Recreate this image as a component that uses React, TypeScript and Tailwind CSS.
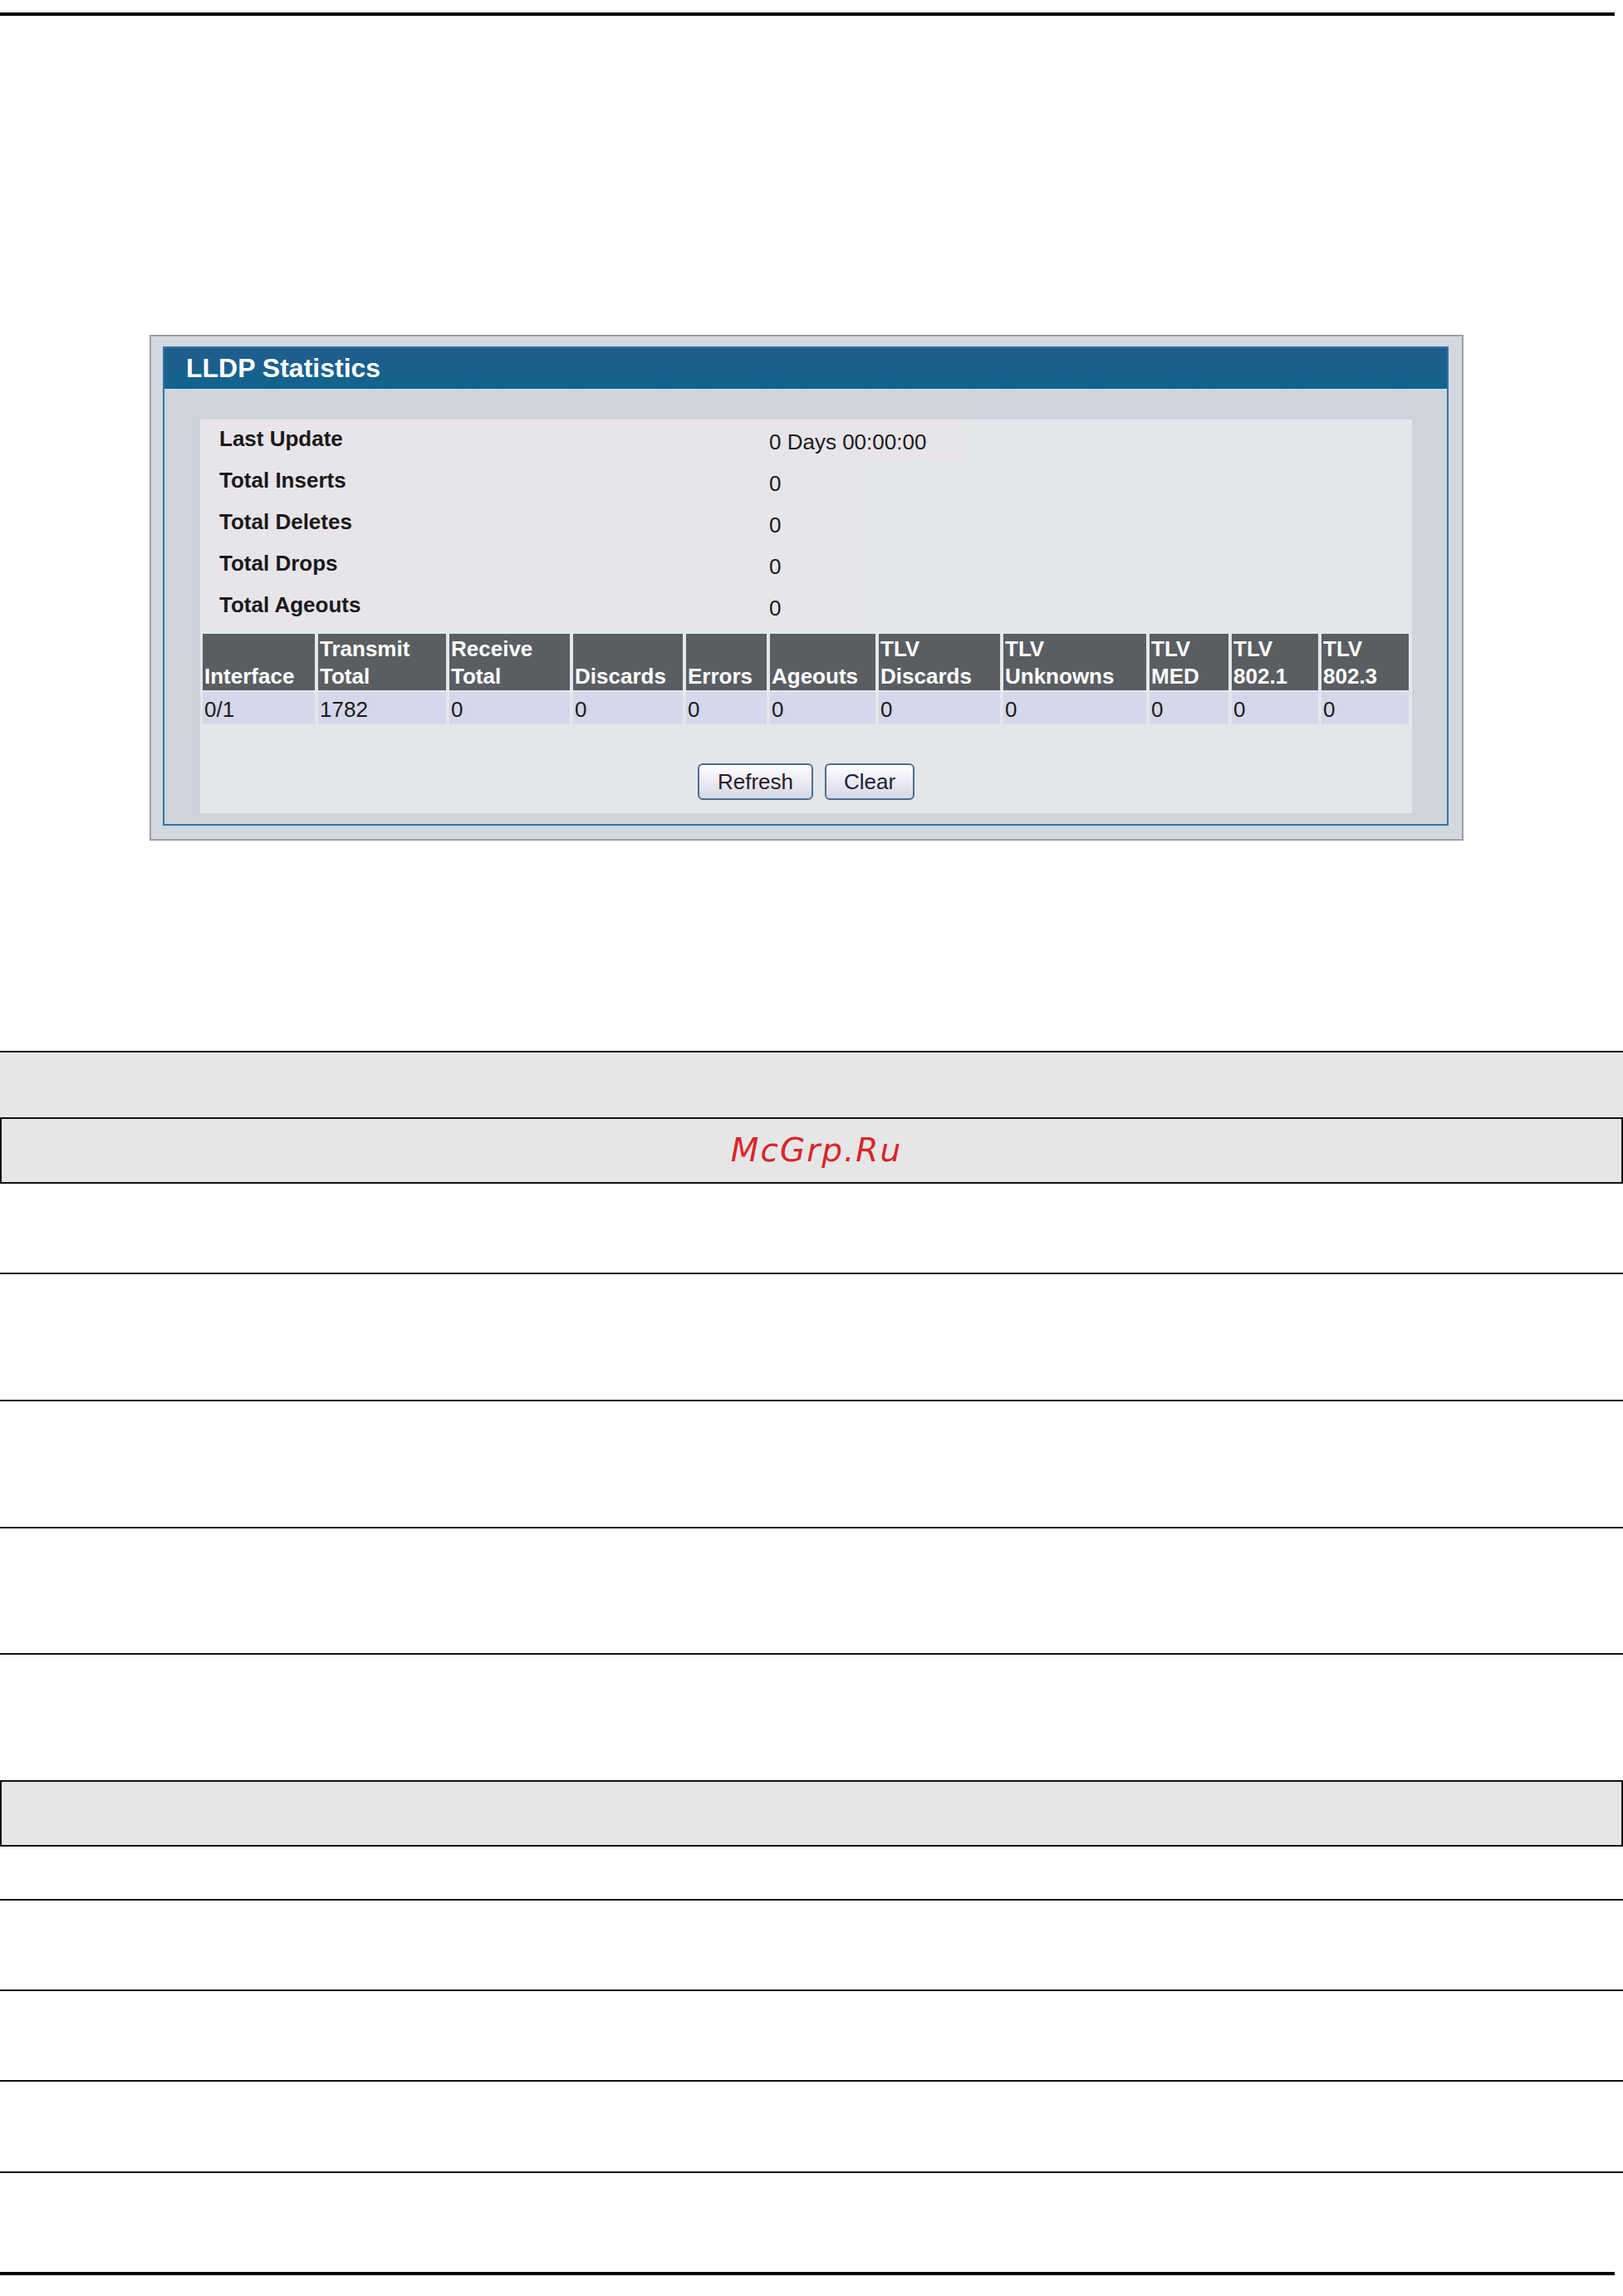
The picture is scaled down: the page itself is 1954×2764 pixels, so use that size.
const stats = [
  { label: "Last Update", value: "0 Days 00:00:00", wide: true },
  { label: "Total Inserts", value: "0" },
  { label: "Total Deletes", value: "0" },
  { label: "Total Drops", value: "0" },
  { label: "Total Ageouts", value: "0" },
];

const columns = [
  { head: ["", "Interface"], value: "0/1" },
  { head: ["Transmit", "Total"], value: "1782" },
  { head: ["Receive", "Total"], value: "0" },
  { head: ["", "Discards"], value: "0" },
  { head: ["", "Errors"], value: "0" },
  { head: ["", "Ageouts"], value: "0" },
  { head: ["TLV", "Discards"], value: "0" },
  { head: ["TLV", "Unknowns"], value: "0" },
  { head: ["TLV", "MED"], value: "0" },
  { head: ["TLV", "802.1"], value: "0" },
  { head: ["TLV", "802.3"], value: "0" },
];

function LldpPanel() {
  return (
    <div className="ml-[180px] mt-[384px] h-[609px] w-[1582px] border-2 border-[#9c9fa6] bg-[#d4d8df] pb-[14px] pl-[14px] pr-[14px] pt-[12px]">
      <div className="h-[577px] w-[1548px] border-2 border-[#3274a6] bg-[#cfd4dc]">
        <div className="h-[49px] bg-gradient-to-b from-[#1f5c8c] to-[#10648f] pl-[26px] text-[32px] font-bold leading-[49px] text-white">
          LLDP Statistics
        </div>
        <div className="pb-[13px] pl-[43px] pr-[42px] pt-[37px]">
          <div className="h-[474px] bg-[#e3e7ea]">
            <div className="flex flex-col">
              {stats.map((s) => (
                <div key={s.label} className="flex h-[50px] items-start">
                  <div className="h-[50px] w-[685px] bg-[#e8e5ea] pl-[23px] text-[26px] font-bold leading-[46px] text-[#1a1a1a]">
                    {s.label}
                  </div>
                  <div
                    className={
                      s.wide
                        ? "h-[50px] w-[237px] bg-[#e8e5ea] pt-[4px] text-[26px] leading-[46px] text-[#1a1a1a]"
                        : "h-[50px] w-[115px] bg-[#e7e5ea] pt-[4px] text-[26px] leading-[46px] text-[#1a1a1a]"
                    }
                  >
                    {s.value}
                  </div>
                </div>
              ))}
            </div>

            <div className="ml-[3px] mt-[8px] grid grid-cols-[135px_154px_145px_132px_97px_127px_146px_172px_95px_104px_105px] gap-x-[4px] gap-y-[2px]">
              {columns.map((c, i) => (
                <div
                  key={"h" + i}
                  className="flex h-[68px] flex-col justify-end bg-[#5a5e62] pl-[2px] text-[26px] font-bold leading-[33px] text-white"
                >
                  {c.head[0] && <div>{c.head[0]}</div>}
                  <div>{c.head[1]}</div>
                </div>
              ))}
              {columns.map((c, i) => (
                <div
                  key={"v" + i}
                  className="h-[39px] bg-[#d4d8ea] pl-[2px] pt-[3px] text-[26px] leading-[36px] text-[#1a1a1a]"
                >
                  {c.value}
                </div>
              ))}
            </div>

            <div className="mt-[47px] flex justify-center gap-[14px]">
              <button className="h-[44px] w-[139px] rounded-[6px] border-2 border-[#4d6d93] bg-gradient-to-b from-[#ffffff] to-[#d6d7e6] text-[26px] leading-[38px] text-[#2a1b28]">
                Refresh
              </button>
              <button className="h-[44px] w-[108px] rounded-[6px] border-2 border-[#4d6d93] bg-gradient-to-b from-[#ffffff] to-[#d6d7e6] text-[26px] leading-[38px] text-[#1d2236]">
                Clear
              </button>
            </div>
          </div>
        </div>
      </div>
    </div>
  );
}

export default function App() {
  return (
    <div className="relative h-[2764px] w-[1954px] overflow-hidden bg-white font-['Liberation_Sans',Arial,sans-serif]">
      <div className="mt-[15px] h-[4px] w-[1944px] bg-black" />

      <LldpPanel />

      {/* lower document rows */}
      <div className="mt-[253px]">
        <div className="h-[80px] border-t-2 border-[#111] bg-[#e6e6e6]" />
        <div className="flex h-[80px] items-center justify-center border-2 border-[#111] bg-[#e6e6e6] pl-[12px]">
          <span className="font-['DejaVu_Sans',sans-serif] text-[39px] italic tracking-[2px] text-[#d8262a]">
            McGrp.Ru
          </span>
        </div>
        <div className="h-[107px]" />
        <div className="h-[153px] border-t-2 border-[#111]" />
        <div className="h-[153px] border-t-2 border-[#111]" />
        <div className="h-[152px] border-t-2 border-[#111]" />
        <div className="h-[153px] border-t-2 border-[#111]" />
        <div className="h-[80px] border-2 border-[#111] bg-[#e6e6e6]" />
        <div className="h-[63px]" />
        <div className="h-[109px] border-t-2 border-[#111]" />
        <div className="h-[109px] border-t-2 border-[#111]" />
        <div className="h-[110px] border-t-2 border-[#111]" />
        <div className="h-[121px] border-t-2 border-[#111]" />
        <div className="h-[4px] w-[1944px] bg-black" />
      </div>
    </div>
  );
}
